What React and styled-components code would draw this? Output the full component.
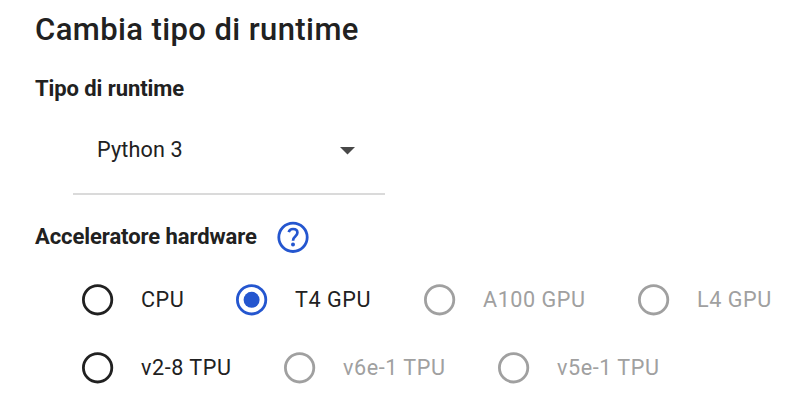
import React from 'react';
import styled, { createGlobalStyle } from 'styled-components';

const GlobalStyle = createGlobalStyle`
  * { box-sizing: border-box; }
  body { margin: 0; background: #fff; color: #212121; font-family: Roboto, sans-serif; }
`;

const Dialog = styled.main`
  width: 810px;
  height: 406px;
  overflow: hidden;
  padding: 9px 0 0 35px;
  background: #fff;
`;

const Title = styled.h1`
  margin: 0;
  height: 40px;
  font-size: 31px;
  line-height: 42px;
  font-weight: 500;
  letter-spacing: 0.4px;
  white-space: nowrap;
`;

const SectionTitle = styled.h2`
  margin: 0;
  font-size: 22px;
  line-height: 32px;
  font-weight: 700;
  letter-spacing: -0.08px;
  white-space: nowrap;
`;

const RuntimeSection = styled.section`
  margin-top: 24px;
`;

const Select = styled.div`
  display: flex;
  align-items: center;
  justify-content: space-between;
  width: 312px;
  height: 90px;
  margin-left: 38px;
  padding: 0 30px 0 24px;
  border-bottom: 2px solid #dadada;
  font-size: 21.6px;
  letter-spacing: 0.15px;
`;

const Arrow = styled.svg`
  display: block;
  width: 15px;
  height: 8px;
  margin-top: 3px;
`;

const HardwareHeader = styled.div`
  display: flex;
  align-items: center;
  gap: 19px;
  margin-top: 26px;
  height: 32px;
`;

const HelpIcon = styled.svg`
  display: block;
  width: 34px;
  height: 34px;
`;

const RadioGroup = styled.div`
  padding-top: 12px;
`;

const RadioRow = styled.div`
  display: flex;
  align-items: center;
  height: 68px;
  margin-left: 46px;
`;

const Option = styled.label`
  display: flex;
  align-items: center;
  gap: 27px;
  flex: none;
  width: ${({ $width }) => $width}px;
  color: ${({ $disabled }) => ($disabled ? '#a0a0a0' : '#212121')};
  font-size: 21.6px;
  letter-spacing: 0.54px;
  white-space: nowrap;
`;

const Circle = styled.svg`
  display: block;
  flex: none;
  width: 33px;
  height: 33px;
`;

function Radio({ label, width, checked, disabled }) {
  const color = checked ? '#2456cf' : disabled ? '#a0a0a0' : '#212121';
  return (
    <Option $width={width} $disabled={disabled}>
      <Circle viewBox="0 0 33 33">
        <circle cx="16.6" cy="16.8" r="14.2" fill="none" stroke={color} strokeWidth="2.8" />
        {checked && <circle cx="16.6" cy="16.8" r="8" fill={color} />}
      </Circle>
      <span>{label}</span>
    </Option>
  );
}

export default function App() {
  return (
    <>
      <GlobalStyle />
      <Dialog>
        <Title>Cambia tipo di runtime</Title>
        <RuntimeSection>
          <SectionTitle>Tipo di runtime</SectionTitle>
          <Select>
            <span>Python 3</span>
            <Arrow viewBox="0 0 15 8"><path d="M0 0h15L7.5 7.5z" fill="#484848" /></Arrow>
          </Select>
        </RuntimeSection>
        <HardwareHeader>
          <SectionTitle>Acceleratore hardware</SectionTitle>
          <HelpIcon viewBox="0 0 34 34" fill="none" stroke="#2456cf">
            <circle cx="17" cy="17.3" r="14.2" strokeWidth="2.8" />
            <path d="M12.7 12.2C13.3 10.2 14.8 9 17 9c2.6 0 4.4 1.5 4.4 3.7 0 1.6-.9 2.6-2.2 3.8-1.5 1.3-2.2 2.2-2.2 4.3" strokeWidth="2.7" />
            <circle cx="17" cy="24.6" r="2" fill="#2456cf" stroke="none" />
          </HelpIcon>
        </HardwareHeader>
        <RadioGroup>
          <RadioRow>
            <Radio label="CPU" width={154} />
            <Radio label="T4 GPU" width={188} checked />
            <Radio label="A100 GPU" width={214} disabled />
            <Radio label="L4 GPU" width={150} disabled />
          </RadioRow>
          <RadioRow>
            <Radio label="v2-8 TPU" width={202} />
            <Radio label="v6e-1 TPU" width={214} disabled />
            <Radio label="v5e-1 TPU" width={180} disabled />
          </RadioRow>
        </RadioGroup>
      </Dialog>
    </>
  );
}
